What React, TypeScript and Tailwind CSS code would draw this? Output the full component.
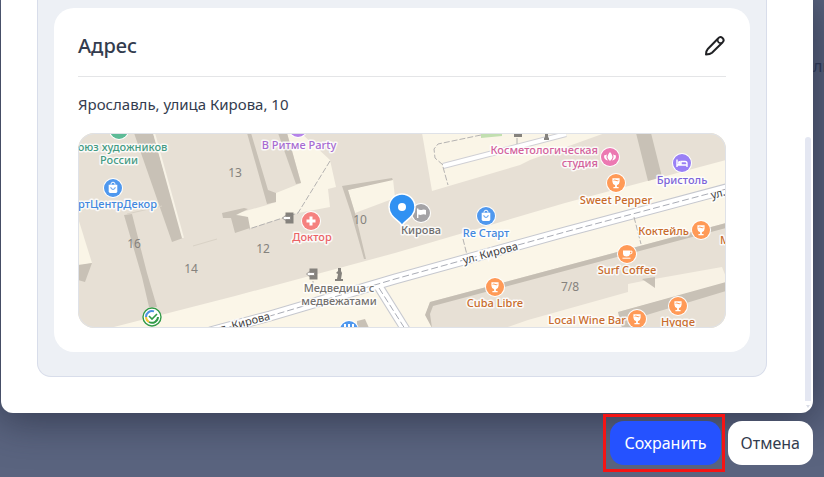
import type { ReactNode } from "react";

const FONT = "font-['Noto_Sans','Open_Sans',sans-serif]";

type LabelProps = {
  x: number;
  y: number;
  tone: string;
  children: ReactNode;
  anchor?: "start" | "middle" | "end";
};

function Label({ x, y, tone, children, anchor = "middle" }: LabelProps) {
  return (
    <text
      x={x}
      y={y}
      textAnchor={anchor}
      className={`text-[11px] font-medium stroke-white/80 [paint-order:stroke] [stroke-linejoin:round] ${tone}`}
      strokeWidth="3"
    >
      {children}
    </text>
  );
}

function House({ x, y, children }: { x: number; y: number; children: ReactNode }) {
  return (
    <text x={x} y={y} textAnchor="middle" className="fill-[#85827d] text-[12px]">
      {children}
    </text>
  );
}

function Dot({ x, y, fill, children }: { x: number; y: number; fill: string; children?: ReactNode }) {
  return (
    <g transform={`translate(${x} ${y})`}>
      <circle r="10" fill="#fff" />
      <circle r="9" fill={fill} />
      {children}
    </g>
  );
}

function Glass() {
  return (
    <g>
      <path d="M-3.6-4.800h7.200v3.600a3.600 3.600 0 0 1-2.700 3.400v1.800h1.700v1.300h-5.200v-1.300h1.700v-1.800a3.600 3.600 0 0 1-2.700-3.400z" fill="#fff" />
      <path d="M-2.400-2.600q1.200-.8 2.400 0t2.400 0" fill="none" stroke="#ff9a57" strokeWidth="1" />
    </g>
  );
}

function Bag() {
  return (
    <g>
      <path d="M-4.3-3.200h8.600v6.800q0 1.400-1.400 1.400h-5.800q-1.400 0-1.400-1.400z" fill="#fff" />
      <path d="M-2-3.200v-.6a2 2 0 0 1 4 0v.6" fill="none" stroke="#fff" strokeWidth="1" />
      <path d="M-2.200-.8a2.200 2.200 0 0 0 4.400 0" fill="none" stroke="#4f98ee" strokeWidth="1" />
    </g>
  );
}

function Entrance({ x, y }: { x: number; y: number }) {
  return (
    <g transform={`translate(${x} ${y})`}>
      <path d="M-2.500-5.500h8v11h-8z" fill="#85827d" />
      <path d="M-5.500 0l3-2.500v1h5v3h-5v1z" fill="#fff" stroke="#85827d" strokeWidth=".8" />
    </g>
  );
}

const BROWN = "fill-[#c86b2b]";
const BLUE = "fill-[#4288df]";
const ORANGE = "#ff9a57";

function AddressMap() {
  return (
    <svg
      viewBox="78 133 648 195"
      preserveAspectRatio="xMidYMid slice"
      role="img"
      aria-label="Карта: Ярославль, улица Кирова, 10"
      className="block h-auto w-full rounded-2xl"
    >
      <rect x="78" y="133" width="648" height="195" fill="#fbf6e8" />

      {/* city blocks */}
      <path d="M78 133H726V160L565 203 395 253 235 296 110 328H78Z" fill="#e7e0d5" />
      <path d="M430 302 726 223V328H432L426 314Z" fill="#e7e0d5" />
      <path d="M78 218 92 263 78 266Z" fill="#faf5e7" />
      <path d="M78 265 92 263 85 282 78 280Z" fill="#c8c1b6" />
      <path d="M134 133H153L183 238 172 242Z" fill="#c8c1b6" />
      <path d="M154 133 183 238" stroke="#f8f3e7" strokeWidth="2" />
      <path d="M124 215 132 214 147 273 157 307 149 307 142 277Z" fill="#c8c1b6" />
      <path d="M127 214 162 206M193 246 217 239" stroke="#d9d2c6" strokeWidth="1" />

      {/* courtyards */}
      <path d="M235 214 267 205 276 202V193L301 183 287 133H301L330 160 336 187 328 189 330 207 298 213 250 228 247 217Z" fill="#faf5e7" />
      <path d="M222 213 244 208 248 209 236 215 248 217 250 228 235 233 231 218 223 218Z" fill="#c8c1b6" />
      <path d="M247 133H251L268 190 276 193V202L267 204Z" fill="#c8c1b6" />
      <path d="M278 133H287L301 183 296 184Z" fill="#c8c1b6" />
      <path d="M348 190 393 179 395 198 355 213Z" fill="#faf5e7" />
      <path d="M342 186 392 178 393 180 348 190 355 213 366 259 364 259 351 213Z" fill="#c8c1b6" />
      <path d="M422 133H605L530 160 520 165 432 191Z" fill="#faf5e7" />
      <path d="M481 133H502V136L481 138Z" fill="#c2dfb0" />
      <path d="M636 133H651L662 177 648 181Z" fill="#c8c1b6" />
      <path d="M430 302 726 223V228L433 306 430 314 432 328 425 315Z" fill="#c5beb3" />
      <path d="M505 328 528 320 628 292V284L643 281 722 267 726 277V283L618 312 622 328Z" fill="#f8f2e5" />
      <path d="M618 312 726 282V291L640 317 645 328H622Z" fill="#c8c1b6" />
      <path d="M642 279 655 277V288Z" fill="#c8c1b6" />
      <path d="M357 321 365 319 369 328H357Z" fill="#c8c1b6" />

      {/* streets */}
      <g fill="none">
        <path d="M443 166 566 134" stroke="#cfcfd4" strokeWidth="6" />
        <path d="M443 166 566 134" stroke="#fff" strokeWidth="4" />
        <path d="M377 284 407 332" stroke="#c6c8cf" strokeWidth="10" />
        <path d="M210 332 270 316 395 279 565 232 730 188" stroke="#c6c8cf" strokeWidth="11" />
        <path d="M377 284 407 332" stroke="#fff" strokeWidth="8" />
        <path d="M210 332 270 316 395 279 565 232 730 188" stroke="#fff" strokeWidth="9" />
        <path d="M210 332 270 316 395 279 565 232 730 188" stroke="#a9acb5" strokeWidth="1" strokeDasharray="7 3" />
        <path d="M379 288 407 332" stroke="#a9acb5" strokeWidth="1" strokeDasharray="7 3" />
        <path
          d="M443 165 435 158 434 149 438 144 481 135M443 167 448 185M517 138V145M330 161 298 213 249 229M634 217 641 244M463 239 467 255M313 281V288"
          stroke="#b4b2b1"
          strokeWidth="1"
          strokeDasharray="6 2"
        />
      </g>

      {/* house numbers */}
      <House x={235} y={177}>13</House>
      <House x={134} y={248}>16</House>
      <House x={191} y={273}>14</House>
      <House x={263} y={253}>12</House>
      <House x={360} y={224}>10</House>
      <House x={570} y={291}>7/8</House>

      {/* street names */}
      <g className="fill-[#3e3d3d] stroke-white/80 text-[11px] [paint-order:stroke]" strokeWidth="3">
        <text transform="translate(464 264) rotate(-15)">ул. Кирова</text>
        <text transform="translate(216 334) rotate(-15)">ул. Кирова</text>
        <text transform="translate(712 199) rotate(-15)">ул. Кирова</text>
      </g>

      {/* places */}
      <Dot x={119} y={130} fill="#5dbb96" />
      <Label x={119} y={151} tone="fill-[#459b83]">Союз художников</Label>
      <Label x={119} y={164} tone="fill-[#459b83]">России</Label>
      <Dot x={113} y={188} fill="#4f98ee"><Bag /></Dot>
      <Label x={157} y={208} tone={BLUE} anchor="end">АртЦентрДекор</Label>
      <Dot x={298} y={128} fill="#b683e8" />
      <Label x={299} y={149} tone="fill-[#a76bd2]">В Ритме Party</Label>
      <Dot x={311} y={221} fill="#f5817f">
        <path d="M0-4.500v9M-4.500 0h9" stroke="#fff" strokeWidth="3" />
      </Dot>
      <Label x={312} y={241} tone="fill-[#eb6265]">Доктор</Label>
      <Entrance x={288} y={218} />
      <Entrance x={312} y={274} />
      <path d="M335 281v-2h2l1-5-2-1 2-2v-3h3v3l1 2-1 6h2v2z" fill="#85827d" />
      <Label x={339} y={292} tone="fill-[#74716e]">Медведица с</Label>
      <Label x={339} y={305} tone="fill-[#74716e]">медвежатами</Label>
      <Dot x={349} y={330} fill="#4f98ee">
        <path d="M-4-6v3a4 4 0 0 0 8 0v-3M0-6v3" stroke="#fff" fill="none" strokeWidth="2" />
      </Dot>
      <Dot x={421} y={213} fill="#a4a3a6">
        <path d="M-4-4.500h1.400v9.500h-1.400zM-2.600-3.500q2 .8 4 .2t3.600.3v4.800q-2-.9-3.800-.2t-3.800 0z" fill="#fff" />
      </Dot>
      <Label x={421} y={234} tone="fill-[#6e6d6d]">Кирова</Label>
      <Dot x={486} y={216} fill="#4f98ee"><Bag /></Dot>
      <Label x={486} y={237} tone={BLUE}>Re Старт</Label>
      <Dot x={495} y={287} fill={ORANGE}><Glass /></Dot>
      <Label x={495} y={307} tone={BROWN}>Cuba Libre</Label>
      <path d="M514 133h8v4h-8zM544 140v-2l1-1v-4h3v4l1 1v2z" fill="#85827d" />
      <Label x={598} y={154} tone="fill-[#d3629c]" anchor="end">Косметологическая</Label>
      <Label x={598} y={167} tone="fill-[#d3629c]" anchor="end">студия</Label>
      <Dot x={610} y={157} fill="#ec79b2">
        <path d="M0-5q5 5 0 9q-5-4 0-9zM-3-2.500q-1.500 3 1 6q-4-.5-4-5q1.800-.6 3-1zM3-2.500q1.500 3-1 6q4-.5 4-5q-1.800-.6-3-1z" fill="#fff" />
      </Dot>
      <Dot x={616} y={183} fill={ORANGE}><Glass /></Dot>
      <Label x={616} y={204} tone={BROWN}>Sweet Pepper</Label>
      <Dot x={682} y={163} fill="#9a80f5">
        <path d="M-5-3.500v7.500M-5 2H5v2M-1-1.500h4q2 0 2 2V2h-6zM-4 1h3" fill="none" stroke="#fff" strokeWidth="1.400" />
        <circle cx="-2.600" cy="-.7" r="1.200" fill="#fff" />
      </Dot>
      <Label x={682} y={184} tone="fill-[#7c64d9]">Бристоль</Label>
      <Dot x={701} y={230} fill={ORANGE}><Glass /></Dot>
      <Label x={689} y={235} tone={BROWN} anchor="end">Коктейль</Label>
      <Label x={720} y={244} tone={BROWN} anchor="start">Май</Label>
      <Dot x={627} y={254} fill={ORANGE}>
        <path d="M-4-3.500h7v3q0 3-3.500 3t-3.500-3z" fill="#fff" />
        <path d="M3-2.800h2q.8 2.800-2.400 3M-4.500 4.200h8" fill="none" stroke="#fff" strokeWidth="1" />
      </Dot>
      <Label x={627} y={274} tone={BROWN}>Surf Coffee</Label>
      <Dot x={637} y={319} fill={ORANGE}><Glass /></Dot>
      <Label x={626} y={324} tone={BROWN} anchor="end">Local Wine Bar</Label>
      <Dot x={678} y={306} fill={ORANGE}><Glass /></Dot>
      <Label x={678} y={326} tone={BROWN}>Hygge</Label>

      <g transform="translate(152 317)" fill="none">
        <circle r="9" fill="#fff" stroke="#329b48" strokeWidth="1.400" />
        <path d="M-6 0A6 6 0 0 1 2-5.600" stroke="#4c91df" strokeWidth="2" />
        <path d="M-6 0A6 6 0 0 0-3 5" stroke="#f1c638" strokeWidth="2" />
        <path d="M-3 5A6 6 0 0 0 6 0" stroke="#329b48" strokeWidth="2" />
        <path d="m-3-1 3 3 5-5" stroke="#329b48" strokeWidth="1.600" />
      </g>

      {/* selected address */}
      <path
        d="M402 226C401 221 389 218 389 207A13 13 0 0 1 415 207C415 218 403 221 402 226Z"
        fill="#3091f2"
        stroke="#fff"
        strokeWidth="1.500"
      />
      <circle cx="402" cy="207" r="4" fill="#fff" />

      <rect x="78.500" y="133.500" width="647" height="194" rx="16" fill="none" stroke="#dfe2e8" />
    </svg>
  );
}

function PencilIcon() {
  return (
    <svg viewBox="0 0 22 22" className="size-[22px]" fill="none" stroke="#202124" strokeWidth="2" strokeLinejoin="round" aria-hidden="true">
      <path d="M2 19.500c0-2.800.5-4.200 1.800-5.500L14.300 3.200a2.900 2.900 0 0 1 4.400 4L8 17.800C6.600 19.100 5 19.500 2 19.500Z" />
      <path d="M13.600 4.200c-.2 2.800 1.300 4.200 4.200 4" strokeWidth="1.800" />
    </svg>
  );
}

export default function App() {
  return (
    <div className={`flex min-h-screen flex-col overflow-hidden bg-[#5a647f] text-[#333c4e] ${FONT}`}>
      <div className="flex pl-px">
        <main className="flex min-w-0 flex-1 rounded-b-xl bg-white pr-0.5 pl-9 shadow-[0_4px_40px_4px_rgba(30,35,55,0.6)]">
          <div className="mb-9 min-w-0 flex-1 rounded-b-[14px] border border-t-0 border-[#d8ddea] bg-[#edf0f5] px-4 pt-2 pb-6">
            <section className="rounded-[20px] bg-white p-6">
              <header className="flex items-center justify-between border-b border-[#e4e5e7] pb-4">
                <h2 className="text-xl leading-7 font-medium">Адрес</h2>
                <button type="button" aria-label="Изменить адрес">
                  <PencilIcon />
                </button>
              </header>
              <p className="pt-[15px] pb-[17px] text-[15px] leading-6">Ярославль, улица Кирова, 10</p>
              <AddressMap />
            </section>
          </div>
          <div className="ml-[38px] flex w-1.5 flex-col items-center justify-end gap-1 pb-1" aria-hidden="true">
            <div className="h-[264px] w-1.5 rounded-t-full bg-[#e4e7f2]" />
            <svg viewBox="0 0 6 4" className="h-1 w-1.5">
              <path d="M1 0h4L3 3z" fill="#d9dce6" />
            </svg>
          </div>
        </main>
        <aside className="w-[11px] overflow-hidden pt-[54px] text-base leading-6 whitespace-nowrap text-[#29334f]">ли</aside>
      </div>
      <footer className="flex items-center justify-end gap-[3px] pt-px pr-[11px] text-base leading-6">
        <div className="border-[3px] border-[#f51414] py-1 pr-px pl-1">
          <button type="button" className="h-11 rounded-[14px] bg-[#2552ff] px-[14px] text-white">
            Сохранить
          </button>
        </div>
        <button type="button" className="h-11 rounded-[14px] bg-white px-[13px]">
          Отмена
        </button>
      </footer>
    </div>
  );
}
